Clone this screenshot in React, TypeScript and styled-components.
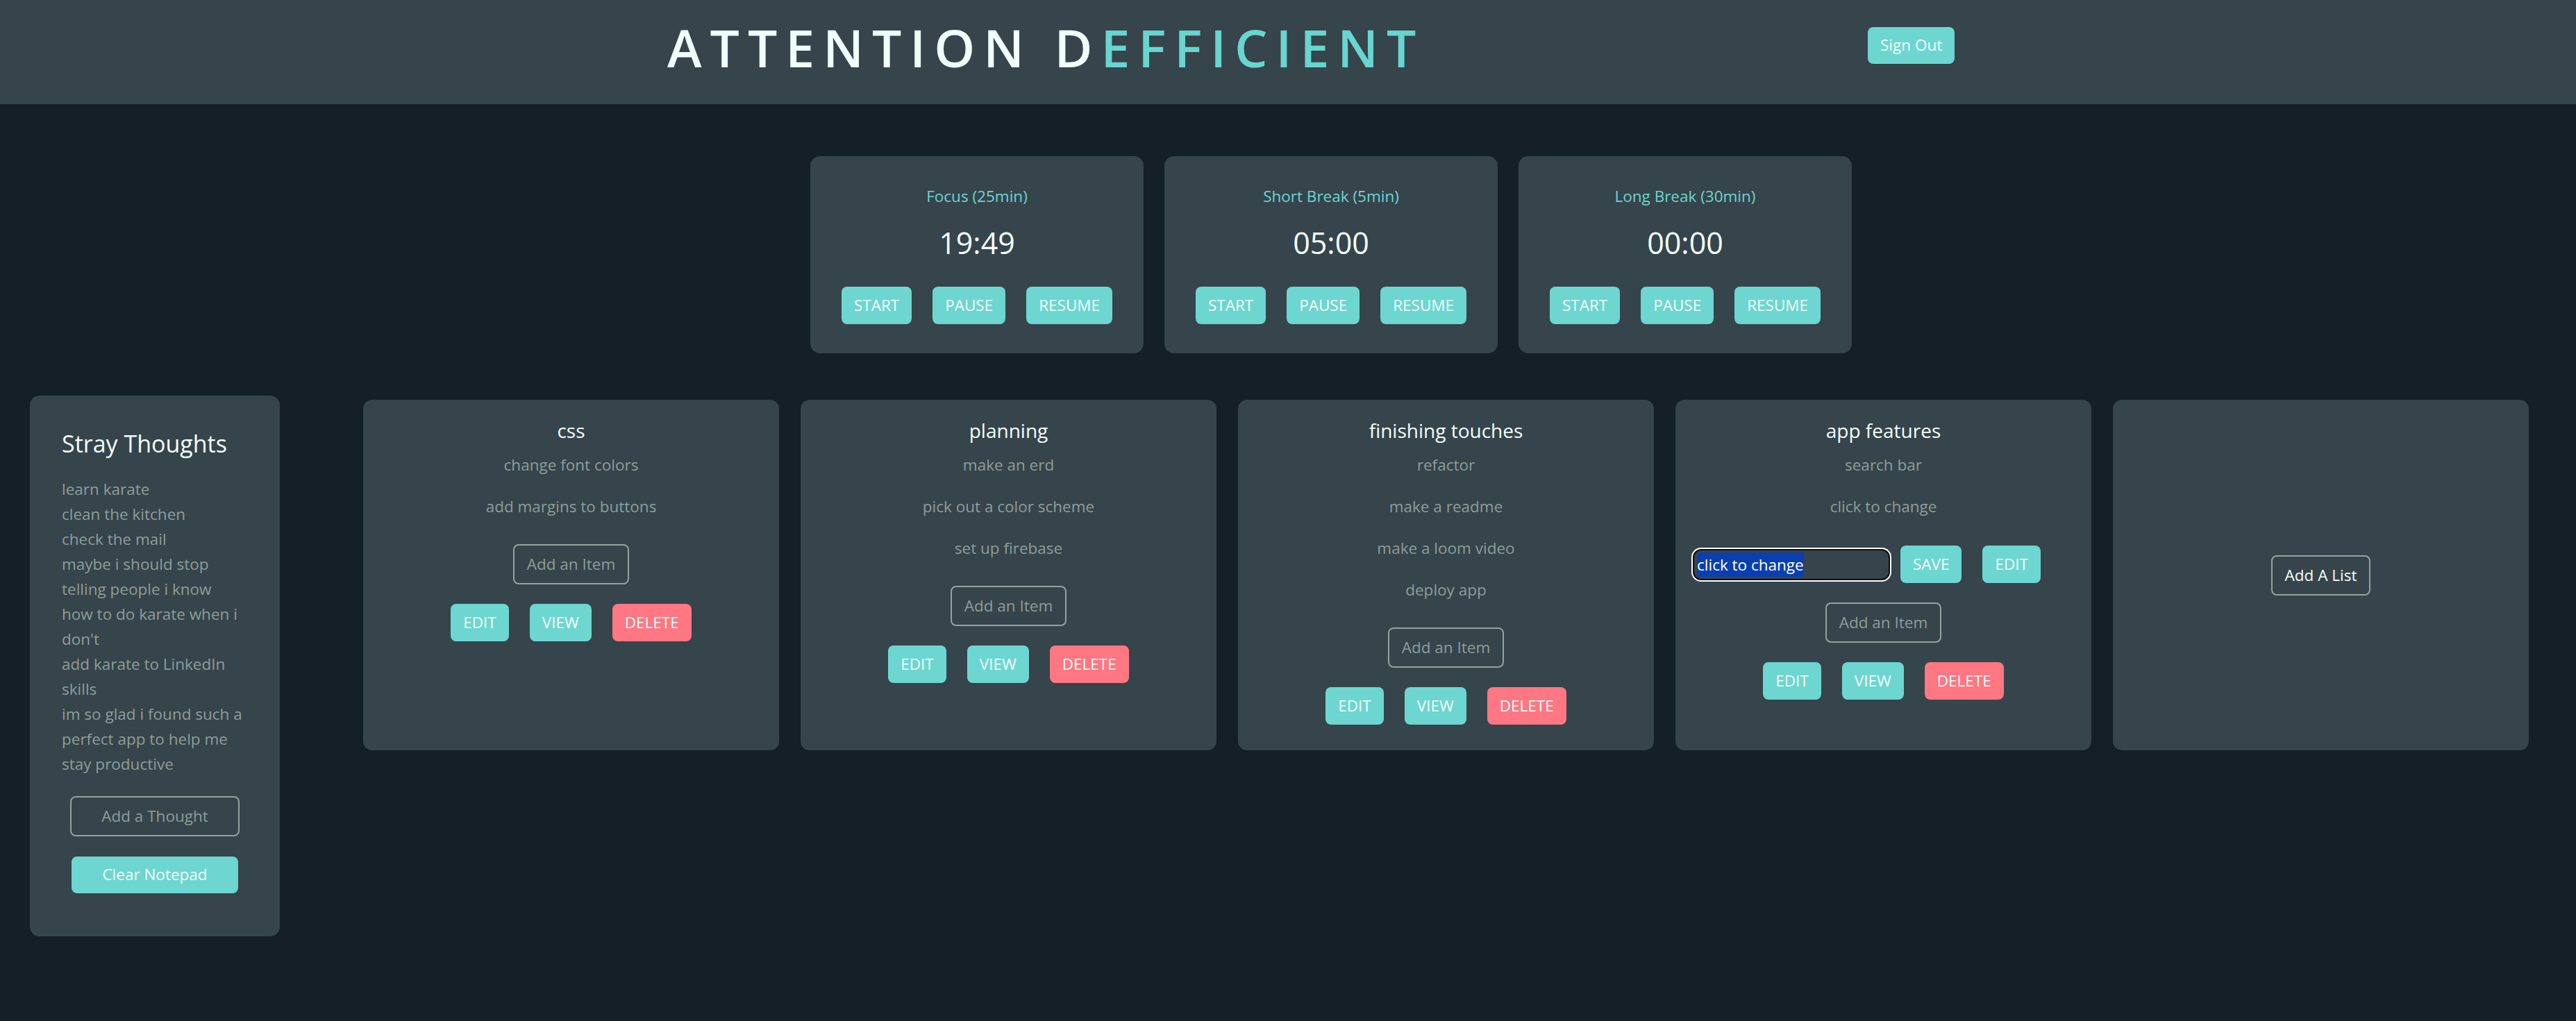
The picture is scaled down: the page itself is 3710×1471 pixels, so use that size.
import React from "react";
import styled, { createGlobalStyle } from "styled-components";

const GlobalStyle = createGlobalStyle`
  html, body {
    margin: 0;
    padding: 0;
    background: #141f28;
  }
  body {
    font-family: "Open Sans", "Noto Sans", sans-serif;
    color: #f3fffb;
  }
  * {
    box-sizing: border-box;
  }
`;

const Page = styled.div`
  min-height: 1471px;
  background: #141f28;
`;

const Header = styled.header`
  height: 150px;
  background: #36444c;
  display: grid;
  grid-template-columns: 1729px auto;
  align-items: center;
  padding-left: 961px;
`;

const Title = styled.h1`
  margin: 0 0 14px;
  font-size: 75px;
  font-weight: 600;
  line-height: 1;
  letter-spacing: 12px;
  color: #effffa;
  white-space: nowrap;
`;

const Accent = styled.span`
  color: #69d5cf;
`;

const Pill = styled.button<{ $tone?: "teal" | "red" }>`
  font-family: inherit;
  font-size: 22.5px;
  line-height: 30px;
  padding: 12px 18px;
  border: none;
  border-radius: 8px;
  background: ${(p) => (p.$tone === "red" ? "#ff7782" : "#6dd6d0")};
  color: #f5fffc;
  cursor: pointer;
  white-space: nowrap;
`;

const SignOut = styled(Pill)`
  padding: 11px 18px 12px;
  justify-self: start;
  margin-bottom: 19px;
`;

const OutlineButton = styled.button<{ $bright?: boolean }>`
  font-family: inherit;
  font-size: 22.5px;
  line-height: 30px;
  padding: 12px 18px;
  background: transparent;
  border: 2px solid #93a39e;
  border-radius: 8px;
  color: ${(p) => (p.$bright ? "#f5fffc" : "#8d9e99")};
  cursor: pointer;
  white-space: nowrap;
`;

const TimerRow = styled.div`
  display: flex;
  gap: 30px;
  margin-top: 75px;
  padding-left: 1167px;
`;

const TimerCard = styled.section`
  width: 480px;
  height: 284px;
  background: #36444c;
  border-radius: 14px;
  padding-top: 43px;
  display: flex;
  flex-direction: column;
  align-items: center;
`;

const TimerLabel = styled.div`
  font-size: 22.5px;
  line-height: 30px;
  color: #6dd6d0;
`;

const TimerValue = styled.div`
  margin-top: 22px;
  font-size: 43px;
  line-height: 60px;
  color: #f3fffb;
`;

const ButtonRow = styled.div<{ $mt?: number }>`
  display: flex;
  gap: 30px;
  margin-top: ${(p) => p.$mt ?? 0}px;
`;

const MainRow = styled.div`
  display: flex;
  align-items: flex-start;
  margin-top: 61px;
  padding-left: 43px;
`;

const Notepad = styled.aside`
  width: 360px;
  background: #36444c;
  border-radius: 14px;
  padding: 46px 46px 62px;
  display: flex;
  flex-direction: column;
`;

const NoteTitle = styled.h2`
  margin: 0;
  font-size: 34px;
  font-weight: 400;
  line-height: 46px;
  color: #f3fffb;
`;

const NoteList = styled.ul`
  list-style: none;
  margin: 25px 0 0;
  padding: 0;
  font-size: 22.5px;
  line-height: 36px;
  color: #8d9e99;
`;

const NoteLine = styled.span`
  display: block;
  white-space: nowrap;
`;

const NoteButton = styled(OutlineButton)<{ $w: number }>`
  align-self: center;
  width: ${(p) => p.$w}px;
  margin-top: 28px;
  padding: 12px 0;
`;

const ClearButton = styled(Pill)<{ $w: number }>`
  align-self: center;
  width: ${(p) => p.$w}px;
  margin-top: 29px;
  padding: 11px 0 12px;
`;

const ListGrid = styled.div`
  display: flex;
  gap: 31px;
  margin-left: 120px;
  margin-top: 6px;
`;

const ListCard = styled.section<{ $center?: boolean }>`
  width: 599px;
  height: 505px;
  background: #36444c;
  border-radius: 13px;
  padding-top: ${(p) => (p.$center ? 0 : 24)}px;
  display: flex;
  flex-direction: column;
  align-items: center;
  justify-content: ${(p) => (p.$center ? "center" : "flex-start")};
`;

const ListTitle = styled.h2`
  margin: 0;
  font-size: 28px;
  font-weight: 400;
  line-height: 40px;
  color: #f3fffb;
`;

const ListItem = styled.p`
  margin: 0;
  font-size: 22.5px;
  line-height: 60px;
  color: #8d9e99;
`;

const AddItem = styled(OutlineButton)`
  margin-top: 24px;
`;

const EditRow = styled.div`
  align-self: stretch;
  display: flex;
  align-items: center;
  gap: 15px;
  margin-top: 26px;
  padding-left: 25px;
`;

const FakeInput = styled.div`
  width: 284px;
  height: 45px;
  border: 2px solid #0d0d0d;
  box-shadow: 0 0 0 2px #ffffff;
  border-radius: 12px;
  background: #36444c;
  padding-left: 4px;
  display: flex;
  align-items: center;
  font-size: 22.5px;
  color: #ffffff;
`;

const Selected = styled.span`
  background: #0b3fb0;
  line-height: 35px;
  white-space: nowrap;
`;

const LowerControls = styled.div`
  display: flex;
  flex-direction: column;
  align-items: center;
`;

const AddItemAfterEdit = styled(OutlineButton)`
  margin-top: 28px;
`;

type Timer = { label: string; value: string };

const timers: Timer[] = [
  { label: "Focus (25min)", value: "19:49" },
  { label: "Short Break (5min)", value: "05:00" },
  { label: "Long Break (30min)", value: "00:00" },
];

const thoughts: string[][] = [
  ["learn karate"],
  ["clean the kitchen"],
  ["check the mail"],
  ["maybe i should stop", "telling people i know", "how to do karate when i", "don't"],
  ["add karate to LinkedIn", "skills"],
  ["im so glad i found such a", "perfect app to help me", "stay productive"],
];

type List = { title: string; items: string[]; editing?: boolean };

const lists: List[] = [
  { title: "css", items: ["change font colors", "add margins to buttons"] },
  { title: "planning", items: ["make an erd", "pick out a color scheme", "set up firebase"] },
  { title: "finishing touches", items: ["refactor", "make a readme", "make a loom video", "deploy app"] },
  { title: "app features", items: ["search bar", "click to change"], editing: true },
];

function CardActions() {
  return (
    <ButtonRow $mt={28}>
      <Pill>EDIT</Pill>
      <Pill>VIEW</Pill>
      <Pill $tone="red">DELETE</Pill>
    </ButtonRow>
  );
}

export default function App() {
  return (
    <Page>
      <GlobalStyle />
      <Header>
        <Title>
          ATTENTION D<Accent>EFFICIENT</Accent>
        </Title>
        <SignOut>Sign Out</SignOut>
      </Header>

      <TimerRow>
        {timers.map((t) => (
          <TimerCard key={t.label}>
            <TimerLabel>{t.label}</TimerLabel>
            <TimerValue>{t.value}</TimerValue>
            <ButtonRow $mt={33}>
              <Pill>START</Pill>
              <Pill>PAUSE</Pill>
              <Pill>RESUME</Pill>
            </ButtonRow>
          </TimerCard>
        ))}
      </TimerRow>

      <MainRow>
        <Notepad>
          <NoteTitle>Stray Thoughts</NoteTitle>
          <NoteList>
            {thoughts.map((lines, i) => (
              <li key={i}>
                {lines.map((l) => (
                  <NoteLine key={l}>{l}</NoteLine>
                ))}
              </li>
            ))}
          </NoteList>
          <NoteButton $w={244}>Add a Thought</NoteButton>
          <ClearButton $w={240}>Clear Notepad</ClearButton>
        </Notepad>

        <ListGrid>
          {lists.map((list) => (
            <ListCard key={list.title}>
              <ListTitle>{list.title}</ListTitle>
              {list.items.map((item) => (
                <ListItem key={item}>{item}</ListItem>
              ))}
              {list.editing ? (
                <>
                  <EditRow>
                    <FakeInput role="textbox">
                      <Selected>click to change</Selected>
                    </FakeInput>
                    <ButtonRow>
                      <Pill>SAVE</Pill>
                      <Pill>EDIT</Pill>
                    </ButtonRow>
                  </EditRow>
                  <LowerControls>
                    <AddItemAfterEdit>Add an Item</AddItemAfterEdit>
                    <CardActions />
                  </LowerControls>
                </>
              ) : (
                <>
                  <AddItem>Add an Item</AddItem>
                  <CardActions />
                </>
              )}
            </ListCard>
          ))}
          <ListCard $center>
            <OutlineButton $bright>Add A List</OutlineButton>
          </ListCard>
        </ListGrid>
      </MainRow>
    </Page>
  );
}
